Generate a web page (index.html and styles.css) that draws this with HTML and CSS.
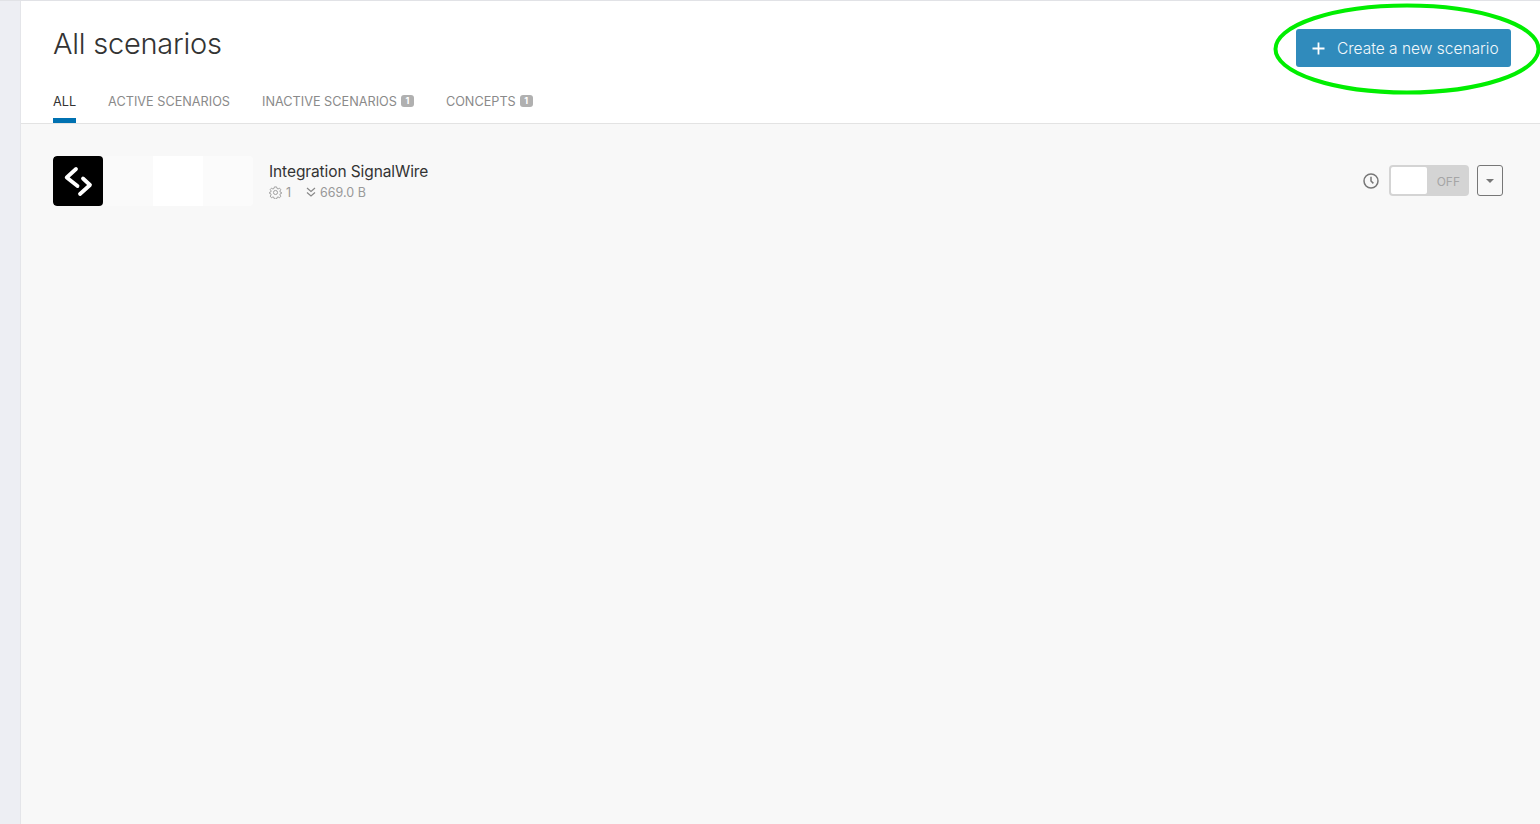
FILE: index.html
```html
<!DOCTYPE html>
<html lang="en">
<head>
<meta charset="utf-8">
<title>All scenarios</title>
<link rel="stylesheet" href="styles.css">
</head>
<body>
<div class="app">
  <aside class="rail"></aside>
  <main class="main">
    <header class="head">
      <div class="head-top">
        <h1 class="title">All scenarios</h1>
        <div class="cta-wrap">
          <a class="cta" href="#">
            <svg class="cta-plus" width="13" height="13" viewBox="0 0 13 13"><path d="M6.500 .5v12M.5 6.500h12" stroke="#fff" stroke-width="1.800" fill="none"/></svg>
            <span>Create a new scenario</span>
          </a>
          <svg class="ring" width="268" height="94" viewBox="0 0 268 94"><ellipse cx="134" cy="47" rx="131.500" ry="43.500" fill="none" stroke="#00ee00" stroke-width="4"/></svg>
        </div>
      </div>
      <nav class="tabs">
        <a class="tab active" href="#">ALL</a>
        <a class="tab" href="#">ACTIVE SCENARIOS</a>
        <a class="tab" href="#">INACTIVE SCENARIOS<span class="badge">1</span></a>
        <a class="tab" href="#">CONCEPTS<span class="badge">1</span></a>
      </nav>
    </header>
    <section class="list">
      <article class="row">
        <div class="thumbs">
          <div class="thumb logo">
            <svg width="50" height="50" viewBox="0 0 50 50"><path d="M23 13 13.700 21.500 24.500 30M30 22.500 37 29 27 38" fill="none" stroke="#fff" stroke-width="3.800" stroke-linecap="round" stroke-linejoin="round"/></svg>
          </div>
          <div class="thumb t1"></div>
          <div class="thumb t2"></div>
          <div class="thumb t3"></div>
        </div>
        <div class="info">
          <div class="name">Integration SignalWire</div>
          <div class="meta">
            <span class="meta-item">
              <svg class="gear" width="13" height="13" viewBox="0 0 14 14" fill="none" stroke="#999" stroke-width="1"><circle cx="7" cy="7" r="2.200"/><path d="M5.800 1h2.400l.4 1.700 1.200.5 1.500-.9 1.400 1.700-1 1.400.4 1.200 1.400.4v1l-1.400.4-.4 1.200 1 1.400-1.400 1.700-1.500-.9-1.200.5-.4 1.700H5.800l-.4-1.700-1.200-.5-1.500.9L1.300 10.900l1-1.400-.4-1.200L.5 7.900v-1l1.400-.4.4-1.200-1-1.400L2.700 2.300l1.500.9 1.200-.5z"/></svg>
              1
            </span>
            <span class="meta-item">
              <svg class="gear" width="10" height="10" viewBox="0 0 10 10" fill="none" stroke="#888" stroke-width="1.200"><path d="M1 1l4 3.500L9 1M1 5.500 5 9l4-3.500"/></svg>
              669.0 B
            </span>
          </div>
        </div>
        <div class="controls">
          <svg class="clock" width="16" height="16" viewBox="0 0 16 16" fill="none" stroke="#777" stroke-width="1.500"><circle cx="8" cy="8" r="7"/><path d="M8 3.800V8l2.400 2.400"/></svg>
          <div class="toggle"><span class="knob"></span><span class="off">OFF</span></div>
          <button class="more" type="button"><span class="caret"></span></button>
        </div>
      </article>
    </section>
  </main>
</div>
</body>
</html>
```

FILE: styles.css
```css
* { box-sizing: border-box; }
html, body { margin: 0; height: 100%; overflow: hidden; }
body {
  font-family: Inter, "Liberation Sans", sans-serif;
  color: #333;
  background: #fff;
}
.app { display: flex; height: 824px; border-top: 1px solid #e1e2e6; }
.rail { width: 20px; background: #edeef3; flex: none; }
.main {
  flex: 1;
  display: flex;
  flex-direction: column;
  border-left: 1px solid #e4e5e9;
  min-width: 0;
}
.head { background: #fff; border-bottom: 1px solid #e3e3e3; padding: 0 29px 0 32px; height: 123px; }
.head-top { display: flex; justify-content: space-between; height: 83px; }
.title {
  margin: 22px 0 0;
  font-size: 29px;
  line-height: 42px;
  font-weight: 300;
  color: #333;
  letter-spacing: -0.25px;
}
.cta-wrap { position: relative; margin-top: 28px; height: 38px; width: 215px; }
.cta {
  display: flex;
  align-items: center;
  gap: 12px;
  height: 38px;
  padding: 0 0 0 16px;
  background: #308bbc;
  border-radius: 3px;
  color: #f2f8fb;
  font-size: 15.500px;
  font-weight: 300;
  text-decoration: none;
  white-space: nowrap;
}
.cta-plus { flex: none; }
.ring { position: absolute; left: -23px; top: -27px; pointer-events: none; }
.tabs { display: flex; gap: 32px; height: 39px; }
.tab {
  display: flex;
  align-items: flex-start;
  padding-top: 10px;
  font-size: 12.700px;
  line-height: 15px;
  color: #8a8a8a;
  text-decoration: none;
  white-space: nowrap;
}
.tab.active { color: #333; border-bottom: 5px solid #0071b1; }
.badge {
  margin: 1px 0 0 4px;
  width: 13px;
  height: 12px;
  border-radius: 3px;
  background: #b0b0b0;
  color: #fff;
  font-size: 9px;
  font-weight: 700;
  line-height: 12px;
  text-align: center;
}
.list { flex: 1; background: #f8f8f8; padding: 32px 37px 0 32px; }
.row { display: flex; align-items: center; height: 50px; }
.thumbs { display: flex; border-radius: 4px; overflow: hidden; }
.thumb { width: 50px; height: 50px; }
.logo { background: #000; border-radius: 4px; }
.logo svg { display: block; }
.t1 { background: #fafafa; }
.t2 { background: #fff; }
.t3 { background: #fbfbfb; }
.info { margin-left: 16px; flex: 1; }
.name { font-size: 15.500px; line-height: 20px; color: #333; font-weight: 400; letter-spacing: -0.1px; }
.meta { display: flex; gap: 15px; font-size: 12.500px; line-height: 16px; color: #999; margin-top: 3px; }
.meta-item { display: flex; align-items: center; gap: 4px; }
.gear { margin-top: -1px; }
.controls { display: flex; align-items: center; margin-top: -2px; }
.clock { margin-right: 10px; margin-top: 2px; }
.toggle {
  display: flex;
  width: 80px;
  height: 31px;
  border-radius: 4px;
  background: #d4d4d4;
  padding: 2px;
  align-items: stretch;
}
.knob { width: 36px; background: #fff; border-radius: 2px; }
.off { flex: 1; font-size: 12px; line-height: 29px; color: #a5a5a5; text-align: right; padding-right: 7px; }
.more {
  margin-left: 8px;
  width: 26px;
  height: 31px;
  padding: 2px 0 0;
  background: transparent;
  border: 1px solid #777;
  border-radius: 3px;
  display: flex;
  align-items: center;
  justify-content: center;
}
.caret { width: 0; height: 0; border-left: 4px solid transparent; border-right: 4px solid transparent; border-top: 4px solid #777; }
```
